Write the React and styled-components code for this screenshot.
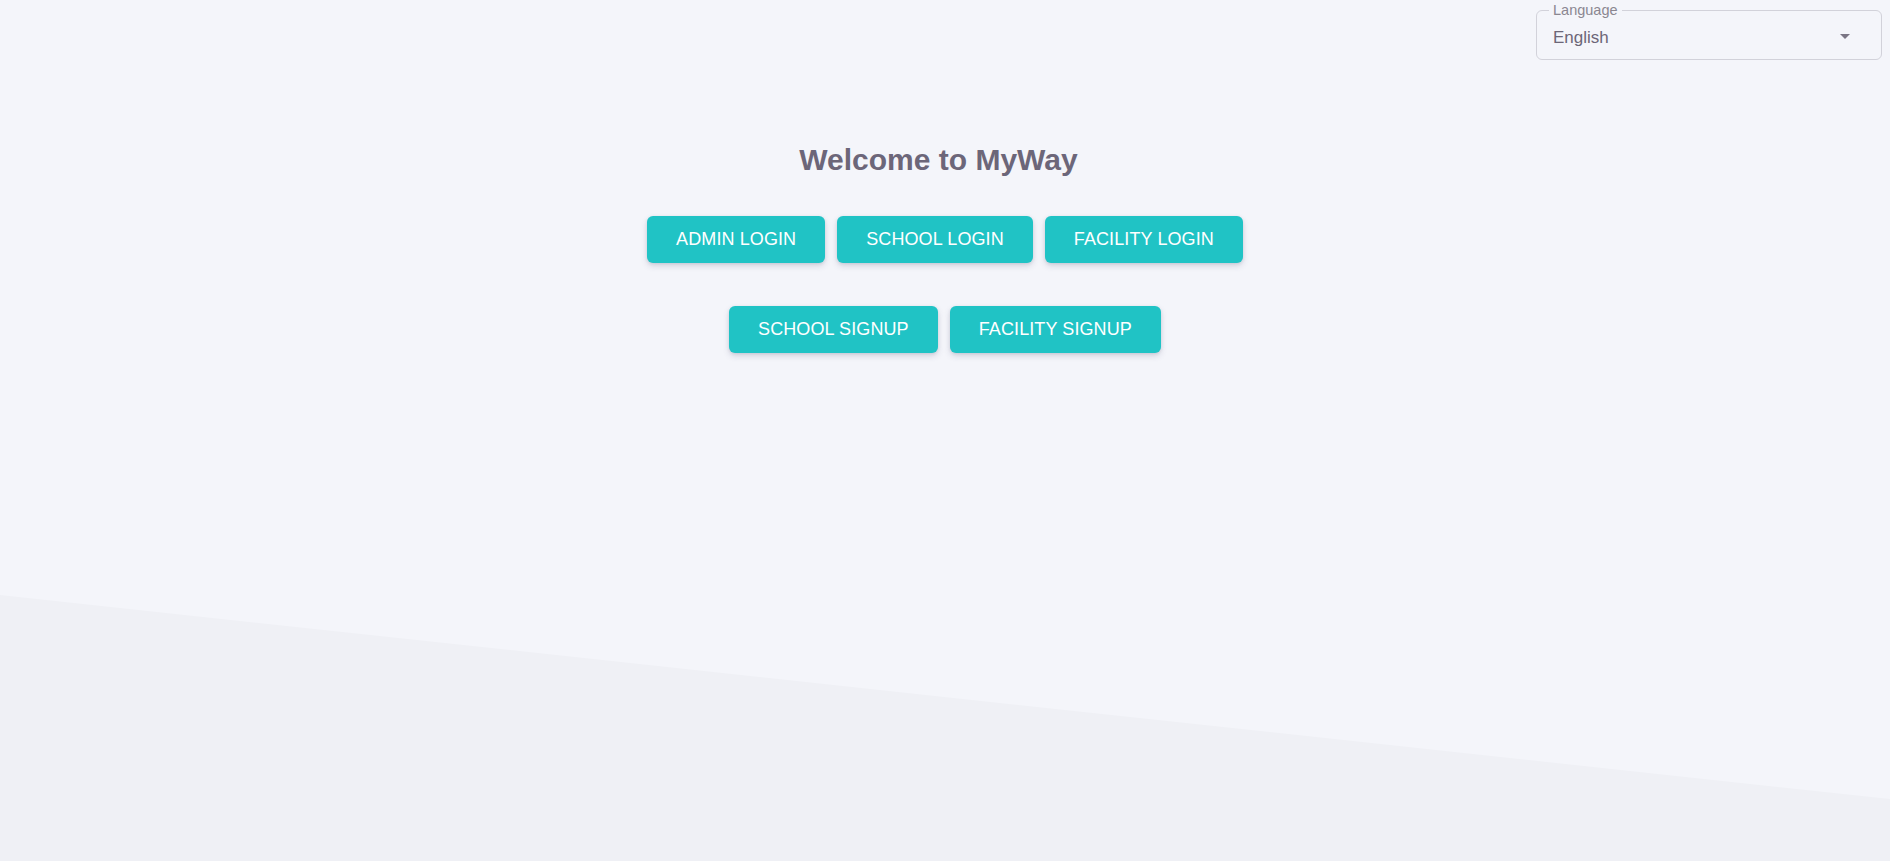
import styled, { createGlobalStyle } from "styled-components";
import { useState } from "react";

const GlobalStyle = createGlobalStyle`
  body {
    margin: 0;
    font-family: "Liberation Sans", Arial, sans-serif;
    background-color: #f4f5fa;
  }
`;

const Page = styled.div`
  position: relative;
  min-height: 100vh;
  overflow: hidden;
  background-color: #f4f5fa;
`;

// lighter-grey slanted band across the bottom of the page
const Slant = styled.div`
  position: absolute;
  left: 0;
  right: 0;
  bottom: 0;
  height: 266px;
  background-color: #eff0f5;
  clip-path: polygon(0 0, 100% 76.7%, 100% 100%, 0 100%);
`;

const Content = styled.div`
  position: relative;
  z-index: 1;
  display: flex;
  flex-direction: column;
  align-items: center;
`;

const Header = styled.div`
  align-self: stretch;
  display: flex;
  justify-content: flex-end;
  padding: 2px 8px 0 0;
`;

const SelectBox = styled.fieldset`
  box-sizing: border-box;
  width: 346px;
  margin: 0;
  padding: 0 12px 11px 12px;
  border: 1px solid #d2d2da;
  border-radius: 6px;
  cursor: pointer;
`;

const Legend = styled.legend`
  padding: 0 4px;
  font-size: 14.5px;
  line-height: 17px;
  color: #8b8791;
`;

const SelectValue = styled.div`
  display: flex;
  align-items: center;
  justify-content: space-between;
  margin-top: 9px;
  padding-left: 4px;
  font-size: 17px;
  line-height: 20px;
  color: #6c6677;
`;

const Caret = styled.span`
  width: 0;
  height: 0;
  margin: -3px 19px 0 0;
  border-left: 5.5px solid transparent;
  border-right: 5.5px solid transparent;
  border-top: 5px solid #7a7584;
`;

const Title = styled.h1`
  margin: 82px 13px 0 0;
  font-size: 30px;
  line-height: 36px;
  font-weight: 700;
  color: #6c6679;
`;

const ButtonRow = styled.div`
  display: flex;
  justify-content: center;
  gap: 12px;
  margin-top: ${(p) => p.$top}px;
`;

const Button = styled.button`
  padding: 8px 29px;
  border: none;
  border-radius: 6px;
  background-color: #20c3c5;
  color: #ffffff;
  font-family: "Liberation Sans", Arial, sans-serif;
  font-size: 18px;
  line-height: 31px;
  letter-spacing: 0.1px;
  text-transform: uppercase;
  box-shadow: 0 3px 6px rgba(70, 70, 110, 0.18), 0 1px 3px rgba(70, 70, 110, 0.12);
  cursor: pointer;
`;

const App = () => {
  const [language] = useState("English");
  return (
    <Page>
      <GlobalStyle />
      <Slant />
      <Content>
        <Header>
          <SelectBox>
            <Legend>Language</Legend>
            <SelectValue>
              {language}
              <Caret />
            </SelectValue>
          </SelectBox>
        </Header>
        <Title>Welcome to MyWay</Title>
        <ButtonRow $top={38}>
          <Button>Admin Login</Button>
          <Button>School Login</Button>
          <Button>Facility Login</Button>
        </ButtonRow>
        <ButtonRow $top={43}>
          <Button>School Signup</Button>
          <Button>Facility Signup</Button>
        </ButtonRow>
      </Content>
    </Page>
  );
};

export default App;
